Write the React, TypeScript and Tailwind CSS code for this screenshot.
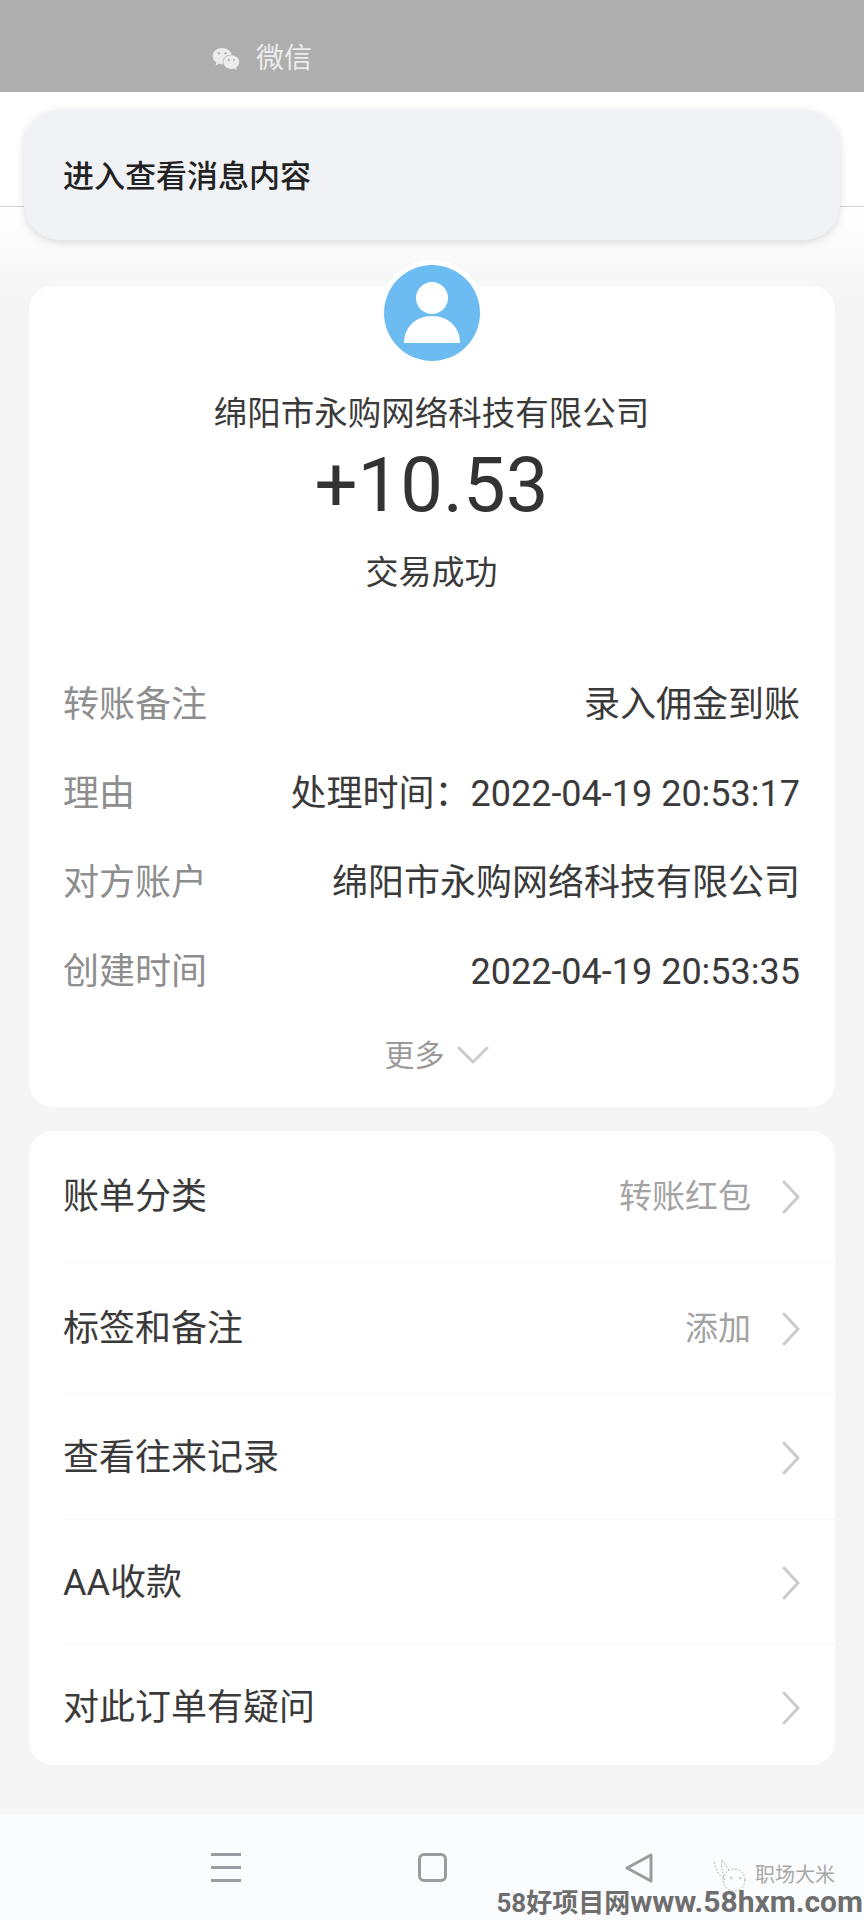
import { FaWeixin } from 'react-icons/fa'

const CJK = "font-['Roboto','Noto_Sans_CJK_SC',sans-serif]"

const DETAILS = [
  { label: '转账备注', value: '录入佣金到账' },
  { label: '理由', value: '处理时间：2022-04-19 20:53:17' },
  { label: '对方账户', value: '绵阳市永购网络科技有限公司' },
  { label: '创建时间', value: '2022-04-19 20:53:35' },
]

const ROWS = [
  { label: '账单分类', value: '转账红包', height: 'h-[131px]' },
  { label: '标签和备注', value: '添加', height: 'h-[131px] pt-[1px]' },
  { label: '查看往来记录', value: '', height: 'h-[126px] pt-[2px]' },
  { label: 'AA收款', value: '', height: 'h-[125px] pt-[2px]' },
  { label: '对此订单有疑问', value: '', height: 'h-[121px] pt-[5px]' },
]

function Chevron() {
  return (
    <svg width="18" height="34" viewBox="0 0 18 34" fill="none" className="ml-[31px]">
      <path d="M2 2 L16 17 L2 32" stroke="#cbcbcb" strokeWidth="3" strokeLinecap="round" strokeLinejoin="round" />
    </svg>
  )
}

function Avatar() {
  return (
    <div className="absolute -top-[26px] left-[350px] rounded-full bg-white p-[5px]">
      <svg width="96" height="96" viewBox="0 0 96 96" className="block">
        <circle cx="48" cy="48" r="48" fill="#6cbcf2" />
        <ellipse cx="48" cy="33" rx="16" ry="16" fill="#fff" />
        <path d="M20 78 C20 62 32 51 48 51 C64 51 76 62 76 78 Z" fill="#fff" />
      </svg>
    </div>
  )
}

export default function App() {
  return (
    <div className={`relative flex h-[1920px] w-[864px] flex-col overflow-hidden bg-[#f5f5f5] ${CJK}`}>
      {/* Status bar */}
      <div className="flex h-[92px] items-center gap-[16px] bg-[#aeaeae] pl-[212px] pt-[26px] text-[#ececec]">
        <FaWeixin size={28} />
        <span className="text-[28px] leading-none">微信</span>
      </div>

      {/* Header */}
      <div className="h-[115px] border-b border-[#d4d4d4] bg-white" />

      {/* Notification */}
      <div className="absolute left-[24px] right-[24px] top-[110px] flex h-[130px] items-center rounded-[36px] bg-[#f0f2f5] pl-[39px] pt-[2px] shadow-[0_2px_10px_rgba(0,0,0,0.14)]">
        <span className="text-[31px] font-medium leading-none text-[#222]">进入查看消息内容</span>
      </div>

      {/* Content */}
      <main className="flex-1 bg-gradient-to-b from-white to-[#f5f5f5] to-[90px] pl-[29px] pr-[29px] pt-[79px]">
        <section className="relative rounded-[24px] bg-white pb-[28px] pl-[34px] pr-[35px] pt-[104px]">
          <Avatar />
          <div className="text-center text-[33.5px] leading-[48px] text-[#3a3a3a]">绵阳市永购网络科技有限公司</div>
          <div className="mt-[2px] text-center text-[76px] leading-[90px] text-[#333]">+10.53</div>
          <div className="mt-[19px] text-center text-[33px] leading-[48px] text-[#3a3a3a]">交易成功</div>

          <div className="mt-[63px]">
            {DETAILS.map((item) => (
              <div key={item.label} className="flex h-[89px] items-center justify-between text-[36px]">
                <span className="text-[#8e8e8e]">{item.label}</span>
                <span className="text-[#3a3a3a]">{item.value}</span>
              </div>
            ))}
          </div>

          <div className="mt-[15px] flex h-[48px] items-center justify-center gap-[12px] pl-[10px]">
            <span className="text-[30px] text-[#9a9a9a]">更多</span>
            <svg width="32" height="18" viewBox="0 0 32 18" fill="none">
              <path d="M2 2 L16 16 L30 2" stroke="#cccccc" strokeWidth="3" strokeLinecap="round" strokeLinejoin="round" />
            </svg>
          </div>
        </section>

        <section className="mt-[24px] rounded-[24px] bg-white pl-[34px]">
          {ROWS.map((row, i) => (
            <div
              key={row.label}
              className={`flex items-center justify-between pr-[35px] ${row.height} ${i > 0 ? 'border-t border-[#f8f8f8]' : ''}`}
            >
              <span className="text-[36px] text-[#3a3a3a]">{row.label}</span>
              <div className="flex items-center">
                {row.value && <span className="text-[33px] text-[#a3a3a3]">{row.value}</span>}
                <Chevron />
              </div>
            </div>
          ))}
        </section>
      </main>

      {/* Nav bar */}
      <nav className="flex h-[106px] items-start justify-center gap-[177px] bg-[#fbfcfe] pt-[39px]">
        <div className="flex h-[29px] w-[30px] flex-col justify-between">
          <div className="h-[3px] bg-[#9a9ca1]" />
          <div className="h-[3px] bg-[#9a9ca1]" />
          <div className="h-[3px] bg-[#9a9ca1]" />
        </div>
        <div className="h-[29px] w-[29px] rounded-[6px] border-[3px] border-[#9a9ca1]" />
        <svg width="30" height="30" viewBox="0 0 30 30" fill="none">
          <path d="M27 2 L3 15 L27 28 Z" stroke="#9a9ca1" strokeWidth="3" strokeLinejoin="round" />
        </svg>
      </nav>

      {/* Watermarks */}
      <div className="absolute bottom-[26px] left-[711px] flex items-center gap-[8px]">
        <svg width="36" height="38" viewBox="0 0 36 38" fill="none" stroke="#b4b4b4" strokeWidth="1" strokeDasharray="2 1.5">
          <path d="M3 6 C5 14 8 20 14 24 C11 16 10 10 11 4 C14 8 16 12 18 14" />
          <circle cx="23" cy="24" r="11" />
          <circle cx="20" cy="22" r="1" />
          <circle cx="29" cy="22" r="1" />
        </svg>
        <span className="text-[20px] leading-none text-[#a8a8a8]">职场大米</span>
      </div>
      <div className="absolute bottom-[1px] right-[1px] whitespace-nowrap text-[30px] font-bold leading-[32px] text-[#6e6e6e]">
        <span className="text-[26px]">58好项目网</span>www.58hxm.com
      </div>
    </div>
  )
}
